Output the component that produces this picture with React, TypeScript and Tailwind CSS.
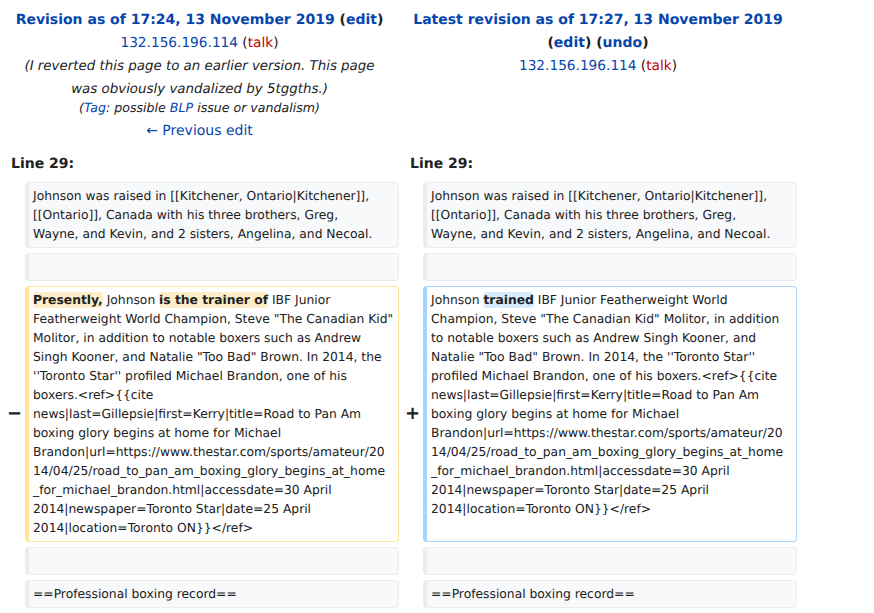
import React from "react"

const link = "text-[#0645ad]"

function Box({
  kind = "context",
  lines,
}: {
  kind?: "context" | "deleted" | "added"
  lines?: React.ReactNode[]
}) {
  const border =
    kind === "deleted"
      ? "border-[#ffe49c] bg-white"
      : kind === "added"
        ? "border-[#a3d3ff] bg-white"
        : "border-[#eaecf0] bg-[#f8f9fa]"
  return (
    <div
      className={`rounded-[4px] border border-l-4 pl-[4px] pr-[3px] pt-[4px] pb-[3px] text-[12.32px] leading-[19px] text-[#202122] ${border}`}
    >
      {lines ? (
        lines.map((l, i) => (
          <div key={i} className="whitespace-pre">
            {l}
          </div>
        ))
      ) : (
        <div>&nbsp;</div>
      )}
    </div>
  )
}

function Del({ children }: { children: React.ReactNode }) {
  return <span className="rounded-[4px] bg-[#feeec8] py-[1px] font-bold">{children}</span>
}

function Ins({ children }: { children: React.ReactNode }) {
  return <span className="rounded-[4px] bg-[#d8ecff] py-[1px] font-bold">{children}</span>
}

function Marker({ children }: { children?: React.ReactNode }) {
  return (
    <div className="flex items-center justify-end pr-[3px] text-[18px] font-bold leading-none text-[#202122]">
      {children}
    </div>
  )
}

const raised = [
  "Johnson was raised in [[Kitchener, Ontario|Kitchener]],",
  "[[Ontario]], Canada with his three brothers, Greg,",
  "Wayne, and Kevin, and 2 sisters, Angelina, and Necoal.",
]

const citeTail = [
  "news|last=Gillepsie|first=Kerry|title=Road to Pan Am",
  "boxing glory begins at home for Michael",
  "Brandon|url=https://www.thestar.com/sports/amateur/20",
  "14/04/25/road_to_pan_am_boxing_glory_begins_at_home",
  "_for_michael_brandon.html|accessdate=30 April",
  "2014|newspaper=Toronto Star|date=25 April",
  "2014|location=Toronto ON}}</ref>",
]

const deleted: React.ReactNode[] = [
  <>
    <Del>Presently,</Del> Johnson <Del>is the trainer of</Del> IBF Junior
  </>,
  'Featherweight World Champion, Steve "The Canadian Kid"',
  "Molitor, in addition to notable boxers such as Andrew",
  'Singh Kooner, and Natalie "Too Bad" Brown. In 2014, the',
  "''Toronto Star'' profiled Michael Brandon, one of his",
  "boxers.<ref>{{cite",
  ...citeTail,
]

const added: React.ReactNode[] = [
  <>
    Johnson <Ins>trained</Ins> IBF Junior Featherweight World
  </>,
  'Champion, Steve "The Canadian Kid" Molitor, in addition',
  "to notable boxers such as Andrew Singh Kooner, and",
  "Natalie \"Too Bad\" Brown. In 2014, the ''Toronto Star''",
  "profiled Michael Brandon, one of his boxers.<ref>{{cite",
  ...citeTail,
]

export default function App() {
  return (
    <div className="min-h-screen bg-white font-['DejaVu_Sans',sans-serif] text-[#202122] [text-rendering:geometricPrecision]">
      <div className="grid w-[797px] grid-cols-[25px_374px_24px_374px] gap-y-[5px]">
        {/* headers */}
        <div className="col-span-2 px-[10px] pt-[9px] text-center">
          <div className="text-[14px] font-bold leading-[23px]">
            <span className={link}>Revision as of 17:24, 13 November 2019</span>{" "}
            (<span className={link}>edit</span>)
          </div>
          <div className="text-[13.7px] leading-[23px]">
            <span className={link}>132.156.196.114</span> (
            <span className="text-[#ba0000]">talk</span>)
          </div>
          <div className="px-[10px] text-[13.4px] italic leading-[23px] text-[#202122]">
            (I reverted this page to an earlier version. This page was obviously
            vandalized by 5tggths.)
          </div>
          <div className="text-[12.6px] italic leading-[14px]">
            (<span className={link}>Tag</span>: possible{" "}
            <span className={link}>BLP</span> issue or vandalism)
          </div>
          <div className={`pt-[5px] text-[14px] leading-[23px] ${link}`}>← Previous edit</div>
        </div>
        <div className="col-span-2 px-[10px] pt-[9px] text-center">
          <div className="text-[14px] font-bold leading-[23px]">
            <span className={link}>Latest revision as of 17:27, 13 November 2019</span>{" "}
            (<span className={link}>edit</span>) (<span className={link}>undo</span>)
          </div>
          <div className="text-[13.7px] leading-[23px]">
            <span className={link}>132.156.196.114</span> (
            <span className="text-[#ba0000]">talk</span>)
          </div>
        </div>

        {/* line numbers */}
        <div className="col-span-2 pl-[11px] pt-[6px] pb-[3px] text-[14px] font-bold leading-[20px]">
          Line 29:
        </div>
        <div className="col-span-2 pl-[11px] pt-[6px] pb-[3px] text-[14px] font-bold leading-[20px]">
          Line 29:
        </div>

        {/* context */}
        <Marker />
        <Box lines={raised} />
        <Marker />
        <Box lines={raised} />

        <Marker />
        <Box />
        <Marker />
        <Box />

        {/* changed paragraph */}
        <Marker>−</Marker>
        <Box kind="deleted" lines={deleted} />
        <Marker>+</Marker>
        <Box kind="added" lines={added} />

        <Marker />
        <Box />
        <Marker />
        <Box />

        <Marker />
        <Box lines={["==Professional boxing record=="]} />
        <Marker />
        <Box lines={["==Professional boxing record=="]} />
      </div>
    </div>
  )
}
